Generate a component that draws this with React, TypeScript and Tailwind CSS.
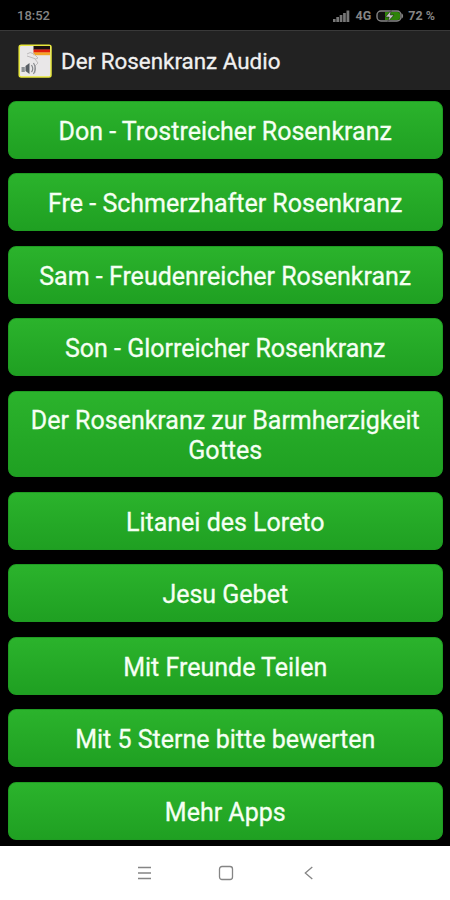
import React from "react";

const items: { label: string; tall?: boolean }[] = [
  { label: "Don - Trostreicher Rosenkranz" },
  { label: "Fre - Schmerzhafter Rosenkranz" },
  { label: "Sam - Freudenreicher Rosenkranz" },
  { label: "Son - Glorreicher Rosenkranz" },
  { label: "Der Rosenkranz zur Barmherzigkeit Gottes", tall: true },
  { label: "Litanei des Loreto" },
  { label: "Jesu Gebet" },
  { label: "Mit Freunde Teilen" },
  { label: "Mit 5 Sterne bitte bewerten" },
  { label: "Mehr Apps" },
];

function StatusBar() {
  return (
    <div className="flex h-[30px] items-center bg-black pt-0.5 pr-[15px] pl-[17px] text-[12px] font-medium text-[#858585]">
      <span className="text-[13px]">18:52</span>
      <svg className="ml-auto" width="17" height="12" viewBox="0 0 17 12" fill="#777">
        <rect x="0" y="9" width="2.6" height="3" />
        <rect x="3.3" y="7" width="2.7" height="5" />
        <rect x="6.7" y="5" width="2.7" height="7" />
        <rect x="10.1" y="3" width="2.7" height="9" />
        <rect x="13.5" y="0.5" width="2.8" height="11.5" />
      </svg>
      <span className="ml-1.5 text-[12.5px] font-bold">4G</span>
      <svg className="ml-[5px]" width="28" height="12" viewBox="0 0 28 12">
        <rect x="1" y="1" width="24" height="10" rx="4" fill="#111" stroke="#858585" strokeWidth="1.4" />
        <path d="M9 2h12.5q2.5 0 2.5 2v4q0 2-2.5 2H9z" fill="#2e8308" />
        <path d="M25.6 3.5c2 .6 2 4.4 0 5z" fill="#858585" />
        <path d="M15 0.5L9.5 7h3.7L12 11.5 18 5h-3.8z" fill="#c4c4c4" stroke="#111" strokeWidth=".5" />
      </svg>
      <span className="ml-1 text-[12.5px] font-bold whitespace-nowrap">72 %</span>
    </div>
  );
}

function AppIcon() {
  return (
    <svg width="34" height="34" viewBox="0 0 34 34">
      <rect x="1.2" y="1.2" width="31.8" height="31.8" rx="2" fill="#e9e7e8" stroke="#e8e83c" strokeWidth="1.5" />
      <path d="M15.5 2H32v3.8H15.5z" fill="#1b1010" />
      <path d="M15.5 5.5H32v3.2H15.5z" fill="#df1d0b" />
      <path d="M15.5 8.4H32v2.8H15.5z" fill="#f5a526" />
      <path d="M9 10q3-3 7 0l4 4q-2 2-5 0l-6-2M17 15l3 4-3 3v7" fill="none" stroke="#bdbabb" strokeWidth="1" />
      <path d="M3.5 23h3.3v5H3.5z" fill="#8b9095" />
      <path d="M7.5 22l4-3v11l-4-3z" fill="#565c63" />
      <path d="M13.5 21q2.5 4 0 7M15.5 19q3.5 5.5 0 11" fill="none" stroke="#85888c" strokeWidth="1.2" />
    </svg>
  );
}

function NavBar() {
  return (
    <div className="grid h-[54px] grid-cols-[124px_202px_124px] items-center bg-white">
      <svg className="ml-[137px]" width="15" height="14" viewBox="0 0 15 14" stroke="#858585" strokeWidth="1.3">
        <path d="M1 1.5h13M1 7h13M1 12.5h13" />
      </svg>
      <svg className="ml-[93.5px]" width="16" height="16" viewBox="0 0 16 16" fill="none" stroke="#858585" strokeWidth="1.3">
        <rect x="1.5" y="1.5" width="13" height="13" rx="2.5" />
      </svg>
      <svg className="-ml-[22px]" width="10" height="14" viewBox="0 0 10 14" fill="none" stroke="#858585" strokeWidth="1.3">
        <path d="M8.3 1L1.3 7l7 6" />
      </svg>
    </div>
  );
}

export default function App() {
  return (
    <div className="flex h-[900px] w-[450px] flex-col overflow-hidden bg-black font-[Roboto,sans-serif]">
      <StatusBar />
      <header className="flex h-[60px] items-center gap-[9px] border-t border-[#393939] bg-[#222222] pl-[18px] text-white">
        <AppIcon />
        <h1 className="pt-px text-[22.4px] leading-[28px] text-[#f0f0f0] [-webkit-text-stroke:0.3px_#f0f0f0]">
          Der Rosenkranz Audio
        </h1>
      </header>
      <main className="flex h-[756px] flex-col gap-[14.5px] pt-[10.75px] pr-[7px] pl-[7.5px]">
        {items.map((item) => (
          <button
            key={item.label}
            className={`${item.tall ? "h-[86.5px]" : "h-[58px]"} shrink-0 rounded-[8px] border border-[#1f9c22] bg-linear-to-b from-[#2bb32c] to-[#1fa022] px-4 pt-[3px] text-center text-[25px] leading-[29.3px] text-[#f5fff3] [-webkit-text-stroke:0.3px_#f5fff3]`}
          >
            {item.label}
          </button>
        ))}
      </main>
      <NavBar />
    </div>
  );
}
